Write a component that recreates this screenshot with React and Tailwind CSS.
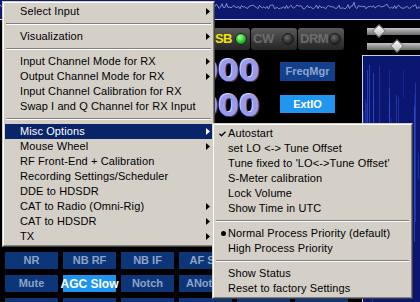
import React from 'react';

function rng(seed) {
  let s = seed;
  return () => {
    s = (s * 16807) % 2147483647;
    return (s - 1) / 2147483646;
  };
}

const wavePts = (() => {
  const r = rng(11);
  const pts = [];
  for (let x = 0; x <= 420; x += 1.5) {
    pts.push(`${x.toFixed(1)},${(7 + (r() - 0.5) * 4 + (r() > 0.93 ? -3 : 0)).toFixed(1)}`);
  }
  return pts.join(' ');
})();

const streaks = (() => {
  const r = rng(29);
  const out = [];
  for (let i = 0; i < 30; i++) {
    out.push({ x: Math.floor(r() * 58), o: 0.2 + r() * 0.45, y: Math.floor(r() * 120), h: 20 + Math.floor(r() * 140) });
  }
  return out;
})();

function Arrow({ color }) {
  return (
    <svg width="4" height="7" viewBox="0 0 4 7" className="block">
      <path d="M0 0L4 3.5L0 7Z" fill={color} />
    </svg>
  );
}

function Frame({ children, className }) {
  return (
    <div className={className}>
      <div className="border border-t-[#d4d0c8] border-l-[#d4d0c8] border-r-[#404040] border-b-[#404040] bg-[#d4d0c8]">
        <div className="border border-t-white border-l-white border-r-[#808080] border-b-[#808080] p-px">
          {children}
        </div>
      </div>
    </div>
  );
}

function Sep() {
  return (
    <div className="h-[10px] flex flex-col justify-center px-px">
      <div className="h-px bg-[#808080]" />
      <div className="h-px bg-white" />
    </div>
  );
}

const mainItems = [
  { t: 'Select Input', a: true },
  'sep',
  { t: 'Visualization', a: true },
  'sep',
  { t: 'Input Channel Mode for RX', a: true },
  { t: 'Output Channel Mode for RX', a: true },
  { t: 'Input Channel Calibration for RX' },
  { t: 'Swap I and Q Channel for RX Input' },
  'sep',
  { t: 'Misc Options', a: true, h: true },
  { t: 'Mouse Wheel', a: true },
  { t: 'RF Front-End + Calibration' },
  { t: 'Recording Settings/Scheduler' },
  { t: 'DDE to HDSDR' },
  { t: 'CAT to Radio (Omni-Rig)', a: true },
  { t: 'CAT to HDSDR', a: true },
  { t: 'TX', a: true },
];

const subItems = [
  { t: 'Autostart', c: 'check' },
  { t: 'set LO <-> Tune Offset' },
  { t: "Tune fixed to 'LO<->Tune Offset'" },
  { t: 'S-Meter calibration' },
  { t: 'Lock Volume' },
  { t: 'Show Time in UTC' },
  'sep',
  { t: 'Normal Process Priority (default)', c: 'dot' },
  { t: 'High Process Priority' },
  'sep',
  { t: 'Show Status' },
  { t: 'Reset to factory Settings' },
];

function MainMenu() {
  return (
    <Frame className="absolute left-[2px] top-[1px] w-[213px]">
      {mainItems.map((it, i) =>
        it === 'sep' ? (
          <Sep key={i} />
        ) : (
          <div
            key={i}
            className={
              it.h
                ? 'h-[15px] flex items-center justify-between pl-[15px] pr-[2px] bg-[#0a246a] text-white'
                : 'h-[15px] flex items-center justify-between pl-[15px] pr-[2px] text-black'
            }
          >
            <span className="whitespace-nowrap tracking-[0.1px]">{it.t}</span>
            {it.a ? <Arrow color={it.h ? '#ffffff' : '#000000'} /> : null}
          </div>
        )
      )}
    </Frame>
  );
}

function SubMenu() {
  return (
    <Frame className="absolute left-[212px] top-[123px] w-[201px]">
      {subItems.map((it, i) =>
        it === 'sep' ? (
          <Sep key={i} />
        ) : (
          <div key={i} className="h-[15px] flex items-center text-black">
            <div className="w-[13px] h-[15px] flex items-center justify-end pr-[2px]">
              {it.c === 'check' ? (
                <svg width="7" height="6" viewBox="0 0 7 6" className="block">
                  <path d="M0.5 2.8L2.5 4.8L6.5 0.8" stroke="#000" strokeWidth="1.4" fill="none" />
                </svg>
              ) : null}
              {it.c === 'dot' ? <div className="w-[5px] h-[5px] rounded-full bg-black" /> : null}
            </div>
            <span className="whitespace-nowrap tracking-[0.1px]">{it.t}</span>
          </div>
        )
      )}
    </Frame>
  );
}

function Led({ on }) {
  return (
    <div
      className={
        on
          ? 'w-[12px] h-[12px] rounded-full bg-[radial-gradient(circle_at_40%_35%,#c0ffb0,#30d030_45%,#0a6a0a)] border border-[#202020]'
          : 'w-[12px] h-[12px] rounded-full bg-[radial-gradient(circle_at_40%_35%,#6a6a6a,#303030_55%,#101010)] border border-[#1a1a1a]'
      }
    />
  );
}

function ModeBtn({ label, on }) {
  return (
    <div className="w-[46px] h-[22px] rounded-[3px] bg-gradient-to-b from-[#5a5a5a] to-[#242424] flex items-center justify-between pl-[2px] pr-[3px]">
      <span
        className={
          on
            ? 'font-bold text-[13px] tracking-[-0.5px] text-[#f0e400]'
            : 'font-bold text-[13px] tracking-[-0.5px] text-[#6c6c6c]'
        }
      >
        {label}
      </span>
      <Led on={on} />
    </div>
  );
}

function Btn({ label, active }) {
  return (
    <div
      className={
        active
          ? 'h-[17px] bg-[#1e94f0] text-white font-bold text-[12px] flex items-center justify-center whitespace-nowrap'
          : 'h-[17px] bg-[#0c3678] text-[#8ea2c8] font-bold text-[11px] flex items-center justify-center whitespace-nowrap'
      }
    >
      {label}
    </div>
  );
}

function Slider({ pos }) {
  return (
    <div className="relative h-[7px] ml-[5px] bg-gradient-to-b from-[#c4c4c4] to-[#6c6c6c]">
      <div
        className="absolute top-[-2px] w-[10px] h-[10px] rotate-45 bg-gradient-to-br from-white to-[#b8b8b8] border border-[#808080]"
        style={{ left: pos }}
      />
    </div>
  );
}

export default function App() {
  const row1 = ['NR', 'NB RF', 'NB IF', 'AF Sq', '', ''];
  const row2 = ['Mute', 'AGC Slow', 'Notch', 'ANotch', '', ''];
  const row3 = ['', '', '', '', '', ''];
  return (
    <div className="relative w-[420px] h-[302px] overflow-hidden bg-black font-['Liberation_Sans',Arial,sans-serif] text-[11px]">
      <div className="flex flex-col h-full">
        <div className="h-[19px] shrink-0 bg-[#0d186e]">
          <svg width="420" height="19" className="block">
            <polyline points={wavePts} fill="none" stroke="#9aa8e0" strokeWidth="0.8" />
          </svg>
        </div>
        <div className="h-px shrink-0 bg-[#cdd4f0]" />
        <div className="flex flex-1 min-h-0">
          <div className="w-[362px] shrink-0 flex flex-col">
            <div className="flex gap-[1px] pl-[204px] mt-[8px] h-[22px]">
              <ModeBtn label="USB" on />
              <ModeBtn label="CW" />
              <ModeBtn label="DRM" />
            </div>
            <div className="flex items-center mt-[8px] h-[26px]">
              <div className="w-[260px] text-right font-['DejaVu_Sans',sans-serif] font-bold text-[30px] leading-[26px] text-[#9a9ae8] [text-shadow:1px_1px_0_#34347a,-1px_-1px_0_#d4d4ff]">
                000
              </div>
              <div className="ml-[20px] w-[55px] h-[19px] bg-[#12408c] text-[#8ea4cc] font-bold text-[11px] flex items-center justify-center">
                FreqMgr
              </div>
            </div>
            <div className="flex items-start mt-[9px] h-[26px]">
              <div className="w-[260px] text-right font-['DejaVu_Sans',sans-serif] font-bold text-[30px] leading-[26px] text-[#9a9ae8] [text-shadow:1px_1px_0_#34347a,-1px_-1px_0_#d4d4ff]">
                000
              </div>
              <div className="ml-[20px] mt-[2px] w-[55px] h-[18px] bg-[#2096f0] text-white font-bold text-[11px] flex items-center justify-center">
                ExtIO
              </div>
            </div>
            <div className="mt-[133px] pl-[5px] grid grid-cols-[repeat(6,53px)] gap-x-[5px] gap-y-[6px]">
              {row1.map((l, i) => (
                <Btn key={'a' + i} label={l} />
              ))}
              {row2.map((l, i) => (
                <Btn key={'b' + i} label={l} active={i === 1} />
              ))}
              {row3.map((l, i) => (
                <Btn key={'c' + i} label={l} />
              ))}
            </div>
          </div>
          <div className="flex-1 flex flex-col">
            <div className="mt-[8px]">
              <Slider pos={7} />
            </div>
            <div className="mt-[8px]">
              <Slider pos={25} />
            </div>
            <div className="mt-[5px] flex-1 relative border-t border-l border-[#c8d0e8] bg-[#0a1670] overflow-hidden">
              {streaks.map((s, i) => (
                <div
                  key={i}
                  className="absolute w-px bg-[#3a5ae0]"
                  style={{ left: s.x, top: s.y, height: s.h, opacity: s.o }}
                />
              ))}
            </div>
          </div>
        </div>
      </div>
      <MainMenu />
      <SubMenu />
    </div>
  );
}
